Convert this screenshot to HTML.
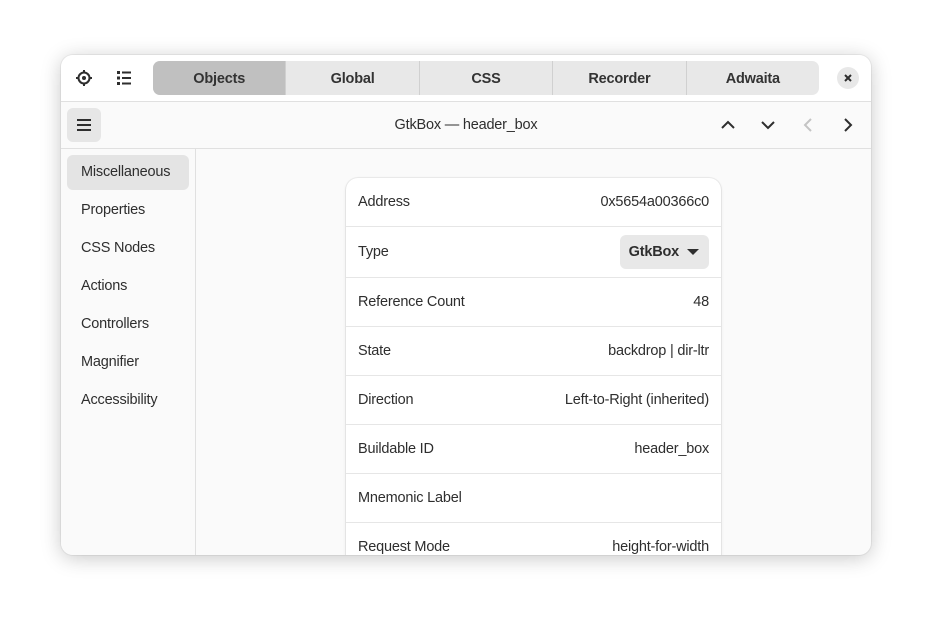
<!DOCTYPE html>
<html><head><meta charset="utf-8"><style>
body{margin:0;width:932px;height:622px;background:#fff;font-family:"Liberation Sans","DejaVu Sans",sans-serif;color:#2e2e2e;position:relative;overflow:hidden}
.win{position:absolute;left:61px;top:55px;width:810px;height:500px;border-radius:12px;overflow:hidden;background:#fafafa;box-shadow:0 3px 20px rgba(0,0,0,.22),0 0 0 1px rgba(0,0,0,.05)}
.hb{position:absolute;left:0;top:0;width:810px;height:46px;background:#fff;border-bottom:1px solid #e0e0e0}
.tabs{position:absolute;left:92px;top:6px;width:666px;height:34px;border-radius:7px;overflow:hidden;display:flex;background:#e8e8e8}
.tab{flex:1;text-align:center;line-height:36px;font-weight:bold;font-size:14.5px;color:#333;border-left:1px solid #d0d0d0;letter-spacing:-.2px}
.tab:first-child{border-left:none;background:#c0c0c0}
.close{position:absolute;left:776px;top:12px;width:22px;height:22px;border-radius:50%;background:#e8e8e8}
.bar2{position:absolute;left:0;top:47px;width:810px;height:46px;border-bottom:1px solid #e0e0e0;background:#fafafa}
.menu{position:absolute;left:6px;top:6px;width:34px;height:34px;border-radius:6px;background:#e6e6e6}
.title{position:absolute;left:0;width:810px;top:0;line-height:46px;text-align:center;font-size:14.5px;letter-spacing:-.2px}
.side{position:absolute;left:0;top:94px;width:134px;height:406px;border-right:1px solid #e0e0e0;background:#fafafa}
.si{position:absolute;left:6px;width:122px;height:35px;line-height:35px;padding-left:14px;box-sizing:border-box;font-size:14.5px;border-radius:6px;letter-spacing:-.2px}
.card{position:absolute;left:285px;top:123px;width:375px;height:420px;background:#fff;border-radius:12px;box-shadow:0 0 0 1px rgba(0,0,0,.05),0 1px 3px rgba(0,0,0,.1)}
.row{position:absolute;left:0;width:375px;border-bottom:1px solid #e6e6e6;font-size:14.5px;letter-spacing:-.2px}
.row .l{position:absolute;left:12px;top:50%;transform:translateY(-50%)}
.row .r{position:absolute;right:12px;top:50%;transform:translateY(-50%)}
</style></head><body>
<div class="win">
 <div class="hb">
  <svg style="position:absolute;left:14px;top:14px" width="18" height="18" viewBox="0 0 18 18"><circle cx="9" cy="9" r="5.5" fill="none" stroke="#2e2e2e" stroke-width="2"/><circle cx="9" cy="9" r="2" fill="#2e2e2e"/><path d="M9 1v3M9 14v3M1 9h3M14 9h3" stroke="#2e2e2e" stroke-width="2"/></svg>
  <svg style="position:absolute;left:55px;top:15px" width="16" height="16" viewBox="0 0 16 16" fill="#2e2e2e"><rect x="1" y="1" width="3" height="3"/><rect x="1" y="6.5" width="3" height="3"/><rect x="1" y="12" width="3" height="3"/><rect x="6" y="1.5" width="9" height="2"/><rect x="6" y="7" width="9" height="2"/><rect x="6" y="12.5" width="9" height="2"/></svg>
  <div class="tabs"><div class="tab">Objects</div><div class="tab">Global</div><div class="tab">CSS</div><div class="tab">Recorder</div><div class="tab">Adwaita</div></div>
  <div class="close"><svg style="position:absolute;left:7px;top:7px" width="8" height="8" viewBox="0 0 8 8"><path d="M1 1l6 6M7 1L1 7" stroke="#2e2e2e" stroke-width="2"/></svg></div>
 </div>
 <div class="bar2">
  <div class="menu"><svg style="position:absolute;left:9px;top:10px" width="16" height="14" viewBox="0 0 16 14"><path d="M1 2h14M1 7h14M1 12h14" stroke="#2e2e2e" stroke-width="2"/></svg></div>
  <div class="title">GtkBox — header_box</div>
  <svg style="position:absolute;left:659px;top:16px" width="16" height="14" viewBox="0 0 16 14"><path d="M2 10l6-6 6 6" fill="none" stroke="#2e2e2e" stroke-width="2"/></svg>
  <svg style="position:absolute;left:699px;top:16px" width="16" height="14" viewBox="0 0 16 14"><path d="M2 4l6 6 6-6" fill="none" stroke="#2e2e2e" stroke-width="2"/></svg>
  <svg style="position:absolute;left:741px;top:15px" width="12" height="16" viewBox="0 0 12 16"><path d="M9 2L3 8l6 6" fill="none" stroke="#c4c4c4" stroke-width="2"/></svg>
  <svg style="position:absolute;left:781px;top:15px" width="12" height="16" viewBox="0 0 12 16"><path d="M3 2l6 6-6 6" fill="none" stroke="#2e2e2e" stroke-width="2"/></svg>
 </div>
 <div class="side">
  <div class="si" style="top:6px;background:#e4e4e4">Miscellaneous</div>
  <div class="si" style="top:44px">Properties</div>
  <div class="si" style="top:82px">CSS Nodes</div>
  <div class="si" style="top:120px">Actions</div>
  <div class="si" style="top:158px">Controllers</div>
  <div class="si" style="top:196px">Magnifier</div>
  <div class="si" style="top:234px">Accessibility</div>
 </div>
 <div class="card">
  <div class="row" style="top:0;height:48px"><span class="l">Address</span><span class="r">0x5654a00366c0</span></div>
  <div class="row" style="top:49px;height:50px"><span class="l">Type</span><span class="r" style="background:#e8e8e8;border-radius:6px;padding:0 30px 0 9px;height:34px;line-height:34px;font-weight:bold">GtkBox<svg style="position:absolute;right:10px;top:14px" width="12" height="7" viewBox="0 0 12 7"><path d="M0 0h12L6 6z" fill="#2e2e2e"/></svg></span></div>
  <div class="row" style="top:100px;height:48px"><span class="l">Reference Count</span><span class="r">48</span></div>
  <div class="row" style="top:149px;height:48px"><span class="l">State</span><span class="r">backdrop | dir-ltr</span></div>
  <div class="row" style="top:198px;height:48px"><span class="l">Direction</span><span class="r">Left-to-Right (inherited)</span></div>
  <div class="row" style="top:247px;height:48px"><span class="l">Buildable ID</span><span class="r">header_box</span></div>
  <div class="row" style="top:296px;height:48px"><span class="l">Mnemonic Label</span></div>
  <div class="row" style="top:345px;height:48px"><span class="l">Request Mode</span><span class="r">height-for-width</span></div>
 </div>
</div>
</body></html>
